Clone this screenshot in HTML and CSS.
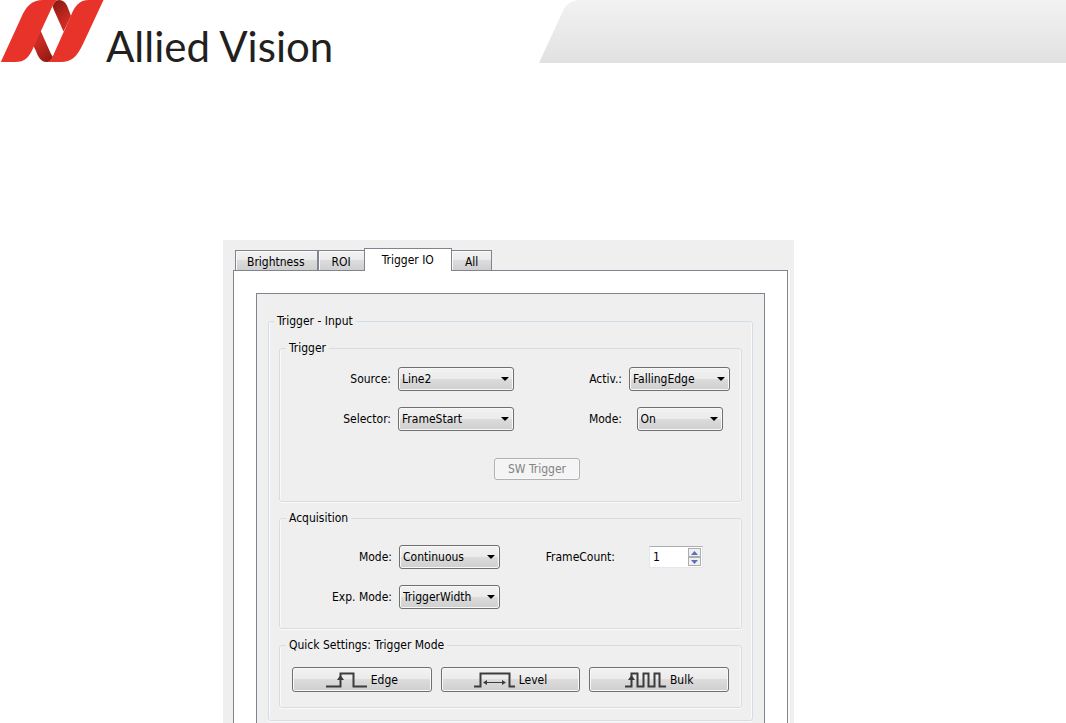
FILE: index.html
```html
<!DOCTYPE html>
<html lang="en">
<head>
  <meta charset="UTF-8" />
  <title>Allied Vision</title>
  <link rel="stylesheet" href="styles.css">
</head>
<body>

<header class="page-header">
  <div class="brand">
    <svg class="brand-mark" width="104" height="63" viewBox="0 0 104 63" aria-hidden="true">
      <defs>
        <linearGradient id="fold-top" x1="0" y1="0" x2="0.5" y2="1">
          <stop offset="0.1" stop-color="#8c1a12" />
          <stop offset="0.8" stop-color="#c92a22" />
        </linearGradient>
        <linearGradient id="fold-bottom" x1="0.3" y1="0" x2="0.8" y2="1">
          <stop offset="0.3" stop-color="#c92a22" />
          <stop offset="1" stop-color="#8c1a12" />
        </linearGradient>
      </defs>
      <path fill="url(#fold-top)" d="M52.500 6 C54 2 56 0 59 0 C64 0 66.500 4 68 8 L71 16 L63.500 31.500 L53.500 9 Z" />
      <path fill="url(#fold-bottom)" d="M40.500 30.500 L51 54 L53 57 C51 61 49 62 46.500 62 C41 62 38 57 36 51 L33.500 46 Z" />
      <path fill="#e8332b" d="M0.800 62 L21 18 C26 6 32 0 43 0 L58 0 C55 1 54 3 53 5 L34 46 C29 58 25 62 15 62 Z" />
      <path fill="#e8332b" d="M103.500 0 L83 44 C77 57 71 62 61 62 L47 62 C50 61 51.500 60 52.500 57 L71 15.500 C75 6 79 0 89 0 Z" />
    </svg>
    <span class="brand-name">Allied Vision</span>
  </div>
  <svg class="header-band" height="63" aria-hidden="true">
    <defs>
      <linearGradient id="band" x1="0" y1="0" x2="0" y2="1">
        <stop offset="0" stop-color="#f2f2f2" />
        <stop offset="1" stop-color="#e1e1e1" />
      </linearGradient>
    </defs>
    <path fill="url(#band)" d="M0 63 L23 13 C27 4 31 1 40 0 H4000 V63 Z" />
  </svg>
</header>

<main class="viewer">
  <nav class="tabs">
    <button class="tab" type="button">Brightness</button>
    <button class="tab" type="button">ROI</button>
    <button class="tab active" type="button">Trigger IO</button>
    <button class="tab" type="button">All</button>
  </nav>

  <div class="tab-page">
    <form class="frame">
      <fieldset class="group outer">
        <legend>Trigger - Input</legend>

        <fieldset class="group">
          <legend>Trigger</legend>
          <div class="fields trigger-fields">
            <label for="source">Source:</label>
            <div class="combo"><select id="source"><option>Line2</option></select></div>
            <label for="activation">Activ.:</label>
            <div class="combo"><select id="activation"><option>FallingEdge</option></select></div>

            <label for="selector">Selector:</label>
            <div class="combo"><select id="selector"><option>FrameStart</option></select></div>
            <label for="trigger-mode">Mode:</label>
            <div class="combo small"><select id="trigger-mode"><option>On</option></select></div>
          </div>
          <div class="software">
            <button class="btn" type="button" disabled>SW Trigger</button>
          </div>
        </fieldset>

        <fieldset class="group">
          <legend>Acquisition</legend>
          <div class="fields acquisition-fields">
            <label for="acq-mode">Mode:</label>
            <div class="combo"><select id="acq-mode"><option>Continuous</option></select></div>
            <label for="frame-count">FrameCount:</label>
            <div class="spin">
              <input id="frame-count" type="number" value="1">
              <div class="spin-buttons">
                <button type="button" aria-label="Increase"><svg width="7" height="4" viewBox="0 0 7 4"><path d="M0 4 L3.500 0 L7 4 Z" /></svg></button>
                <button type="button" aria-label="Decrease"><svg width="7" height="4" viewBox="0 0 7 4"><path d="M0 0 L3.500 4 L7 0 Z" /></svg></button>
              </div>
            </div>

            <label for="exp-mode">Exp. Mode:</label>
            <div class="combo"><select id="exp-mode"><option>TriggerWidth</option></select></div>
          </div>
        </fieldset>

        <fieldset class="group">
          <legend>Quick Settings: Trigger Mode</legend>
          <div class="quick">
            <button class="btn" type="button">
              <svg class="pulse" width="41" height="16" viewBox="0 0 41 16">
                <path class="line" d="M0 14.500 H14.500 V1.500 H27.500 V14.500 H41" />
                <path class="head" d="M14.500 3 L18 8 H11 Z" />
              </svg>
              Edge
            </button>
            <button class="btn" type="button">
              <svg class="pulse" width="41" height="16" viewBox="0 0 41 16">
                <path class="line" d="M0 14.500 H6.500 V1.500 H35.500 V14.500 H41" />
                <path class="line thin" d="M11 10.500 H30" />
                <path class="head" d="M9 10.500 L13 8 V13 Z M32 10.500 L28 8 V13 Z" />
              </svg>
              Level
            </button>
            <button class="btn" type="button">
              <svg class="pulse" width="41" height="16" viewBox="0 0 41 16">
                <path class="line" d="M0 14.500 H6.500 V1.500 H12.500 V14.500 H18.500 V1.500 H23.500 V14.500 H29.500 V1.500 H34.500 V14.500 H41" />
                <path class="head" d="M6.500 3 L10 8 H3 Z" />
              </svg>
              Bulk
            </button>
          </div>
        </fieldset>
      </fieldset>
    </form>
  </div>
</main>

</body>
</html>
```

FILE: styles.css
```css
:root {
  --ui-bg: #efefef;
  --frame-line: #82838e;
  --group-line: #d3dde6;
  --button-line: #707070;
  --face: linear-gradient(#f2f2f2 0%, #ebebeb 48%, #dcdcdc 50%, #cfcfcf 100%);
}

* {
  box-sizing: border-box;
}

body {
  margin: 0;
  min-height: 100vh;
  display: flex;
  flex-direction: column;
  background: #fff;
  color: #000;
  font-family: "DejaVu Sans Condensed", "Noto Sans", sans-serif;
  font-size: 12px;
  line-height: 16px;
}

button, select, input {
  font: inherit;
  color: inherit;
}

/* Header */
.page-header {
  display: flex;
  height: 63px;
}

.brand {
  display: flex;
  flex: 0 0 539px;
  gap: 2px;
}

.brand-name {
  padding-top: 20px;
  font-family: Lato, sans-serif;
  font-size: 42px;
  line-height: 52px;
  color: #231f20;
  white-space: nowrap;
}

.header-band {
  flex: 1;
  min-width: 0;
}

/* Viewer window */
.viewer {
  flex: 1;
  display: flex;
  flex-direction: column;
  max-width: 571px;
  margin: 177px 0 0 223px;
  padding: 8px 6px 0 10px;
  background: var(--ui-bg);
}

.tabs {
  display: flex;
  align-items: flex-end;
  padding: 0 2px;
}

.tab {
  height: 20px;
  padding: 2px 13px 0;
  border: 1px solid var(--frame-line);
  border-left-width: 0;
  border-bottom: 0;
  background: var(--face);
  box-shadow: inset 1px 1px #fafafa;
}

.tab:first-child {
  padding: 2px 12px 0 11px;
  border-left-width: 1px;
  border-right-width: 2px;
}

.tab:nth-child(2) {
  border-right: 0;
}

.tab.active {
  height: 23px;
  margin-bottom: -1px;
  padding: 0 17px;
  border-left-width: 1px;
  background: #fff;
  box-shadow: none;
  z-index: 1;
}

.tab-page {
  flex: 1;
  display: flex;
  padding: 22px 22px 0;
  border: 1px solid var(--frame-line);
  border-bottom: 0;
  background: #fff;
  box-shadow: 2px 0 #fafafa;
}

.frame {
  flex: 1;
  padding: 19px 11px 2px;
  border: 1px solid var(--frame-line);
  border-bottom: 0;
  background: var(--ui-bg);
}

/* Group boxes */
.group {
  min-width: 0;
  margin: 0 0 8px;
  padding: 0;
  border: 1px solid var(--group-line);
  border-radius: 3px;
  box-shadow: inset -1px 0 #fafafa, inset 1px 0 #fafafa, 0 1px #fafafa;
}

.group legend {
  margin-left: 6px;
  padding: 0 3px;
}

.group.outer {
  margin: 0;
  padding: 11px 10px 4px;
}

.group.outer > legend {
  margin-left: -5px;
}

.fields {
  display: grid;
  gap: 16px 7px;
  align-items: center;
}

.trigger-fields {
  grid-template-columns: 111px 116px 1fr 101px;
  padding: 11px 11px 0 0;
}

.acquisition-fields {
  grid-template-columns: 112px 101px 1fr 108px;
  padding: 19px 11px 19px 0;
}

.fields label {
  text-align: right;
}

.combo {
  display: grid;
  align-items: center;
}

.combo.small {
  justify-self: center;
  width: 86px;
}

.combo select {
  grid-area: 1 / 1;
  appearance: none;
  width: 100%;
  height: 24px;
  padding: 0 3px;
  border: 1px solid var(--button-line);
  border-radius: 3px;
  background: var(--face);
  box-shadow: inset 0 0 0 1px #f8f8f8;
}

/* drop-down arrow */
.combo::after {
  content: "";
  grid-area: 1 / 1;
  justify-self: end;
  margin-right: 5px;
  border: 4px solid transparent;
  border-top-color: #000;
  border-bottom: 0;
  pointer-events: none;
}

.btn {
  height: 25px;
  padding: 0 13px;
  border: 1px solid var(--button-line);
  border-radius: 3px;
  background: var(--face);
  box-shadow: inset 0 0 0 1px #f8f8f8;
}

.btn:disabled {
  height: 22px;
  border-color: #adb2b5;
  background: #f4f4f4;
  color: #838383;
}

.software {
  display: flex;
  padding: 27px 0 21px 214px;
}

.spin {
  justify-self: center;
  display: flex;
  width: 54px;
  height: 22px;
  border: 1px solid #e2e8ee;
  border-top-color: #abadb3;
  background: #fff;
}

.spin input {
  flex: 1;
  min-width: 0;
  padding: 0 3px;
  border: 0;
  background: none;
  appearance: textfield;
}

.spin input::-webkit-inner-spin-button {
  display: none;
}

.spin-buttons {
  display: grid;
  width: 14px;
  padding: 1px 1px 1px 0;
}

.spin-buttons button {
  display: flex;
  align-items: center;
  justify-content: center;
  padding: 0;
  border: 1px solid #abadb3;
  background: #f0f0f0;
}

.spin-buttons path {
  fill: #5a70b4;
}

.quick {
  display: flex;
  gap: 9px;
  padding: 14px 12px 15px;
}

.quick .btn {
  flex: 1;
  display: flex;
  align-items: center;
  justify-content: center;
  gap: 4px;
}

.pulse .line {
  fill: none;
  stroke: #3c3c3c;
  stroke-width: 2;
}

.pulse .thin {
  stroke-width: 1;
}

.pulse .head {
  fill: #3c3c3c;
}
```
